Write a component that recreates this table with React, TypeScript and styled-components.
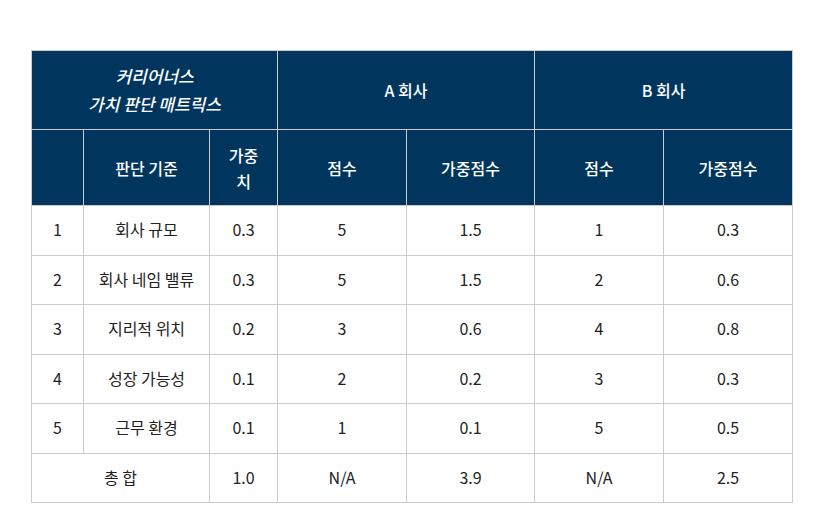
import React from "react";
import styled, { createGlobalStyle } from "styled-components";

const GlobalStyle = createGlobalStyle`
  body {
    margin: 0;
    background: #ffffff;
    font-family: "Noto Sans CJK KR", "Noto Sans", sans-serif;
  }
`;

const Page = styled.div`
  padding: 50px 0 0 31px;
`;

const Table = styled.table`
  border-collapse: collapse;
  table-layout: fixed;
  width: 762px;
  font-size: 16px;
  color: #222222;
`;

const HeadCell = styled.th<{ italic?: boolean; lh?: number }>`
  background-color: #00365e;
  color: #ffffff;
  font-weight: 500;
  font-style: ${(props) => (props.italic ? "italic" : "normal")};
  font-size: ${(props) => (props.italic ? 17 : 16)}px;
  line-height: ${(props) => props.lh ?? 26}px;
  border: 1px solid #cccccc;
  text-align: center;
  padding: 0 6px;
`;

const HeadRow = styled.tr<{ h: number }>`
  height: ${(props) => props.h}px;
`;

const BodyRow = styled.tr`
  height: 49.5px;
`;

const Cell = styled.td`
  border: 1px solid #cccccc;
  text-align: center;
  font-weight: 400;
  padding: 0 4px 2px;
`;

type Row = {
  no: string;
  name: string;
  weight: string;
  aScore: string;
  aWeighted: string;
  bScore: string;
  bWeighted: string;
};

const rows: Row[] = [
  { no: "1", name: "회사 규모", weight: "0.3", aScore: "5", aWeighted: "1.5", bScore: "1", bWeighted: "0.3" },
  { no: "2", name: "회사 네임 밸류", weight: "0.3", aScore: "5", aWeighted: "1.5", bScore: "2", bWeighted: "0.6" },
  { no: "3", name: "지리적 위치", weight: "0.2", aScore: "3", aWeighted: "0.6", bScore: "4", bWeighted: "0.8" },
  { no: "4", name: "성장 가능성", weight: "0.1", aScore: "2", aWeighted: "0.2", bScore: "3", bWeighted: "0.3" },
  { no: "5", name: "근무 환경", weight: "0.1", aScore: "1", aWeighted: "0.1", bScore: "5", bWeighted: "0.5" },
];

const App: React.FC = () => {
  return (
    <Page>
      <GlobalStyle />
      <Table>
        <colgroup>
          <col style={{ width: 52 }} />
          <col style={{ width: 126 }} />
          <col style={{ width: 68 }} />
          <col style={{ width: 129 }} />
          <col style={{ width: 128 }} />
          <col style={{ width: 129 }} />
          <col style={{ width: 129 }} />
        </colgroup>
        <thead>
          <HeadRow h={79}>
            <HeadCell colSpan={3} italic lh={28}>
              커리어너스
              <br />
              가치 판단 매트릭스
            </HeadCell>
            <HeadCell colSpan={2}>A 회사</HeadCell>
            <HeadCell colSpan={2}>B 회사</HeadCell>
          </HeadRow>
          <HeadRow h={76}>
            <HeadCell />
            <HeadCell>판단 기준</HeadCell>
            <HeadCell>
              가중
              <br />치
            </HeadCell>
            <HeadCell>점수</HeadCell>
            <HeadCell>가중점수</HeadCell>
            <HeadCell>점수</HeadCell>
            <HeadCell>가중점수</HeadCell>
          </HeadRow>
        </thead>
        <tbody>
          {rows.map((r) => (
            <BodyRow key={r.no}>
              <Cell>{r.no}</Cell>
              <Cell>{r.name}</Cell>
              <Cell>{r.weight}</Cell>
              <Cell>{r.aScore}</Cell>
              <Cell>{r.aWeighted}</Cell>
              <Cell>{r.bScore}</Cell>
              <Cell>{r.bWeighted}</Cell>
            </BodyRow>
          ))}
          <BodyRow>
            <Cell colSpan={2}>총 합</Cell>
            <Cell>1.0</Cell>
            <Cell>N/A</Cell>
            <Cell>3.9</Cell>
            <Cell>N/A</Cell>
            <Cell>2.5</Cell>
          </BodyRow>
        </tbody>
      </Table>
    </Page>
  );
};

export default App;
